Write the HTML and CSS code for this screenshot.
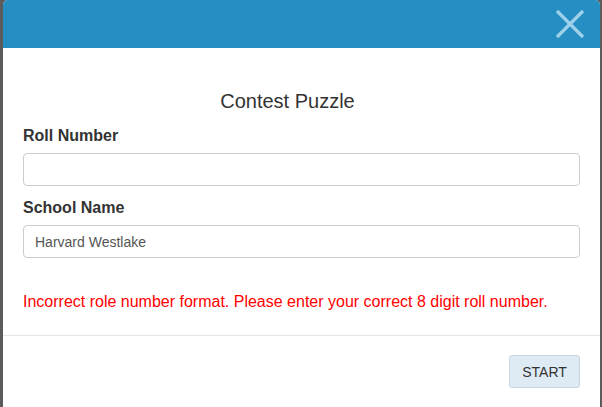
FILE: index.html
```html
<!DOCTYPE html>
<html lang="en">
<head>
  <meta charset="UTF-8" />
  <title>Contest Puzzle</title>
  <link rel="stylesheet" href="styles.css">
</head>
<body>
  <div class="modal">
    <div class="modal-header">
      <button class="close" aria-label="Close">
        <svg width="30" height="30" viewBox="0 0 30 30">
          <path d="M2 2 L28 28 M28 2 L2 28" stroke="#9fd0ea" stroke-width="3.2" fill="none" />
        </svg>
      </button>
    </div>
    <div class="modal-body">
      <h2 class="title">Contest Puzzle</h2>
      <label class="field-label" for="rollNumber">Roll Number</label>
      <input class="field" type="text" id="rollNumber" />
      <label class="field-label" for="schoolName">School Name</label>
      <input class="field" type="text" id="schoolName" value="Harvard Westlake" />
      <p class="error">Incorrect role number format. Please enter your correct 8 digit roll number.</p>
    </div>
    <div class="modal-footer">
      <button class="start-btn">START</button>
    </div>
  </div>
</body>
</html>
```

FILE: styles.css
```css
* {
  margin: 0;
  padding: 0;
  box-sizing: border-box;
}
body {
  background: #5b5b5b;
  font-family: 'Liberation Sans', Arial, sans-serif;
  color: #333;
  height: 407px;
  overflow: hidden;
}
.modal {
  margin-left: 3px;
  width: 597px;
  height: 420px;
  background: #fff;
  border-radius: 5px 5px 0 0;
  overflow: hidden;
}
/* Header */
.modal-header {
  background: #258fc4;
  height: 48px;
  display: flex;
  justify-content: flex-end;
  align-items: center;
  padding-right: 15px;
}
.close {
  background: none;
  border: none;
  width: 30px;
  height: 30px;
  display: flex;
  cursor: pointer;
}
/* Body */
.modal-body {
  padding: 0 20px;
  display: flex;
  flex-direction: column;
}
.title {
  font-size: 20px;
  font-weight: normal;
  text-align: center;
  margin: 40px 28px 0 0;
  line-height: 26px;
  color: #333;
}
.field-label {
  font-size: 16px;
  font-weight: bold;
  margin-top: 13px;
  line-height: 18px;
  color: #333;
}
.field {
  margin-top: 8px;
  height: 33px;
  width: 557px;
  border: 1px solid #ccc;
  border-radius: 4px;
  padding: 0 11px;
  font-family: 'Liberation Sans', Arial, sans-serif;
  font-size: 14px;
  color: #555;
}
.field + .field-label {
  margin-top: 13px;
}
.error {
  margin-top: 35px;
  font-size: 16px;
  line-height: 18px;
  color: #f00;
}
/* Footer */
.modal-footer {
  margin-top: 24px;
  border-top: 1px solid #e5e5e5;
  padding: 19px 20px 0 0;
  display: flex;
  justify-content: flex-end;
}
.start-btn {
  width: 71px;
  height: 33px;
  background: #deeaf4;
  border: 1px solid #c9d6e0;
  border-radius: 3px;
  font-family: 'Liberation Sans', Arial, sans-serif;
  font-size: 14px;
  color: #333;
  cursor: pointer;
}
```
